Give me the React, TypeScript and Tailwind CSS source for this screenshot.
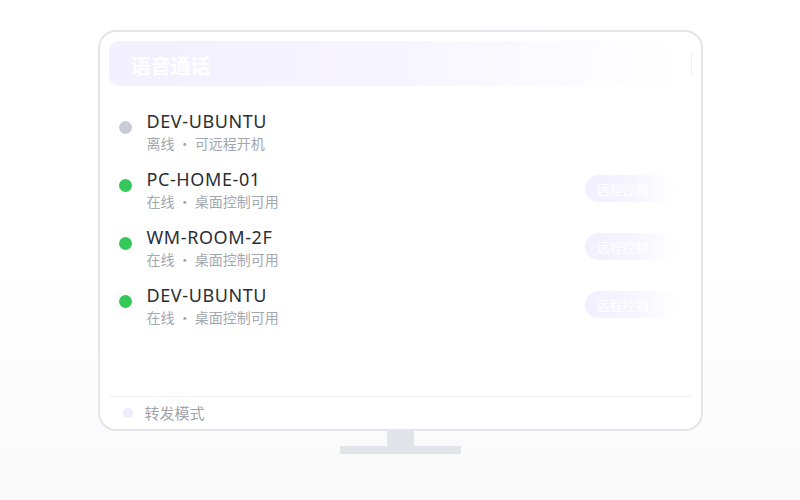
import React from "react";

const rows = [
  { name: "DEV-UBUNTU", sub: "离线 · 可远程开机", online: false },
  { name: "PC-HOME-01", sub: "在线 · 桌面控制可用", online: true },
  { name: "WM-ROOM-2F", sub: "在线 · 桌面控制可用", online: true },
  { name: "DEV-UBUNTU", sub: "在线 · 桌面控制可用", online: true },
];

const cjk = { fontFamily: '"Noto Sans CJK SC", "Noto Sans", sans-serif' };

export default function App() {
  return (
    <div
      className="w-full h-[500px] bg-gradient-to-b from-white from-50% to-[#f9f9fa] flex flex-col items-center pt-[30px]"
      style={{ fontFamily: '"Noto Sans", "Noto Sans CJK SC", sans-serif' }}
    >
      <div className="w-[605px] h-[401px] border-2 border-[#e3e5ea] rounded-[18px] bg-white px-[9px] pt-[9px] flex flex-col overflow-hidden">
        <div className="h-[45px] rounded-[10px] bg-gradient-to-r from-[#f3f0ff] via-[#f7f5ff] to-white flex items-center justify-between pl-[22px] pr-0">
          <span className="text-[20px] font-bold text-white leading-none pt-[4px]" style={cjk}>
            语音通话
          </span>
          <div className="flex items-center h-full">
            <span className="text-[14px] text-white/70 mr-[30px]" style={cjk}>语音</span>
            <div className="w-px h-[26px] bg-[#f1f1f5]" />
          </div>
        </div>
        <div className="flex-1 flex flex-col pt-[23px]">
          {rows.map((r, i) => (
            <div key={i} className="flex items-center h-[58px] pl-[10px] pb-[15px]">
              <div className="flex items-start flex-1">
                <div
                  className={`w-[13px] h-[13px] rounded-full mt-[12px] ${
                    r.online ? "bg-[#34c759]" : "bg-[#c9ccd4]"
                  }`}
                />
                <div className="ml-[15px] flex flex-col">
                  <span className="text-[18px] leading-[24px] text-[#2a2e35] tracking-[0.6px]">
                    {r.name}
                  </span>
                  <span className="text-[14px] leading-[18px] text-[#a3a7ae] mt-[1px]" style={cjk}>
                    {r.sub}
                  </span>
                </div>
              </div>
              {r.online && (
                <div className="w-[92px] h-[27px] rounded-full bg-gradient-to-r from-[#f2efff] via-[#f6f4ff] to-white flex items-center pl-[12px] mr-[15px]">
                  <span className="text-[13px] text-white leading-none" style={cjk}>远程控制</span>
                </div>
              )}
            </div>
          ))}
        </div>
        <div className="h-[33px] border-t border-[#eef0f3] mx-[1px] flex items-center pl-[13px]">
          <div className="w-[10px] h-[10px] rounded-full bg-[#efebff]" />
          <span className="ml-[12px] text-[15px] text-[#a0a4ab]" style={cjk}>转发模式</span>
        </div>
      </div>
      <div className="w-[27px] h-[15px] bg-[#e1e4e8]" />
      <div className="w-[121px] h-[8px] bg-[#e1e4e8]" />
    </div>
  );
}
